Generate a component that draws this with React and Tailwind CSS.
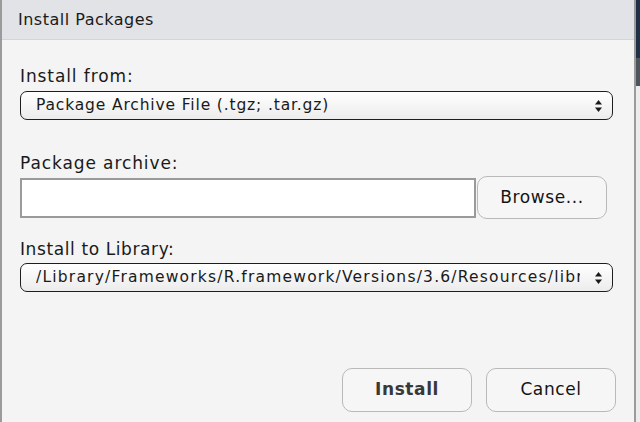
import React from "react";

const font = { fontFamily: '"DejaVu Sans", "Liberation Sans", sans-serif' };

function Arrows() {
  return (
    <svg width="9" height="14" viewBox="0 0 9 14" className="shrink-0">
      <path d="M4.5 1 L8 5.5 L1 5.5 Z" fill="#1a1a1a" />
      <path d="M4.5 13 L8 8.5 L1 8.5 Z" fill="#1a1a1a" />
    </svg>
  );
}

function Select({ children, track }) {
  return (
    <div className="flex h-[29px] w-[593px] items-center overflow-hidden rounded-[7px] border-[1.5px] border-[#1e1e1e] bg-gradient-to-b from-[#ffffff] to-[#ececec] pl-[15px] pr-[9px]">
      <div className={`flex-1 overflow-hidden whitespace-nowrap text-[15.5px] text-[#1a1a1a] ${track}`}>
        {children}
      </div>
      <div className="ml-[14px] flex items-center">
        <Arrows />
      </div>
    </div>
  );
}

function Btn({ children, bold, w }) {
  return (
    <div
      className={`flex items-center justify-center rounded-[10px] border-[1.5px] border-[#b9b9b9] bg-[#f6f6f7] text-[17px] tracking-[0.6px] ${
        bold ? "font-bold text-[#383838]" : "text-[#141414]"
      } ${w}`}
    >
      {children}
    </div>
  );
}

export default function App() {
  return (
    <div className="flex h-[422px] w-[640px] overflow-hidden bg-[#eeeeee]" style={font}>
      <div className="flex h-full w-[636px] flex-col border-l-2 border-r-2 border-[#9b9b9b] bg-[#f3f4f3]">
        <div className="flex h-[40px] items-center border-b border-[#d4d5d7] bg-[#e2e3e6] pl-[16px] pt-[1px] text-[16px] tracking-[0.5px] text-[#1a1a1a]">
          Install Packages
        </div>
        <div className="flex flex-1 flex-col pl-[18px]">
          <div className="mt-[26px] text-[17px] leading-[20px] tracking-[0.9px] text-[#1a1a1a]">Install from:</div>
          <div className="mt-[5px]">
            <Select track="tracking-[0.85px]">Package Archive File (.tgz; .tar.gz)</Select>
          </div>
          <div className="mt-[33px] text-[17px] leading-[20px] tracking-[0.9px] text-[#1a1a1a]">Package archive:</div>
          <div className="mt-[3px] flex items-start">
            <div className="mt-[2px] h-[40px] w-[456px] border-2 border-[#9a9a9a] bg-white" />
            <div className="ml-[1px]">
              <Btn w="w-[130px] h-[43px]">Browse...</Btn>
            </div>
          </div>
          <div className="mt-[20px] text-[17px] leading-[20px] tracking-[0.6px] text-[#1a1a1a]">Install to Library:</div>
          <div className="mt-[4px]">
            <Select track="tracking-[1.2px]">/Library/Frameworks/R.framework/Versions/3.6/Resources/library</Select>
          </div>
          <div className="mt-[76px] flex gap-[14px] pl-[322px]">
            <Btn bold w="w-[130px] h-[44px]">Install</Btn>
            <Btn w="w-[130px] h-[44px]">Cancel</Btn>
          </div>
        </div>
      </div>
      <div className="flex h-full flex-1 flex-col">
        <div className="h-[58px] bg-[#1f2f45]" />
        <div className="h-[28px] bg-[#4d545c]" />
        <div className="flex-1 bg-[#ececec]" />
      </div>
    </div>
  );
}
